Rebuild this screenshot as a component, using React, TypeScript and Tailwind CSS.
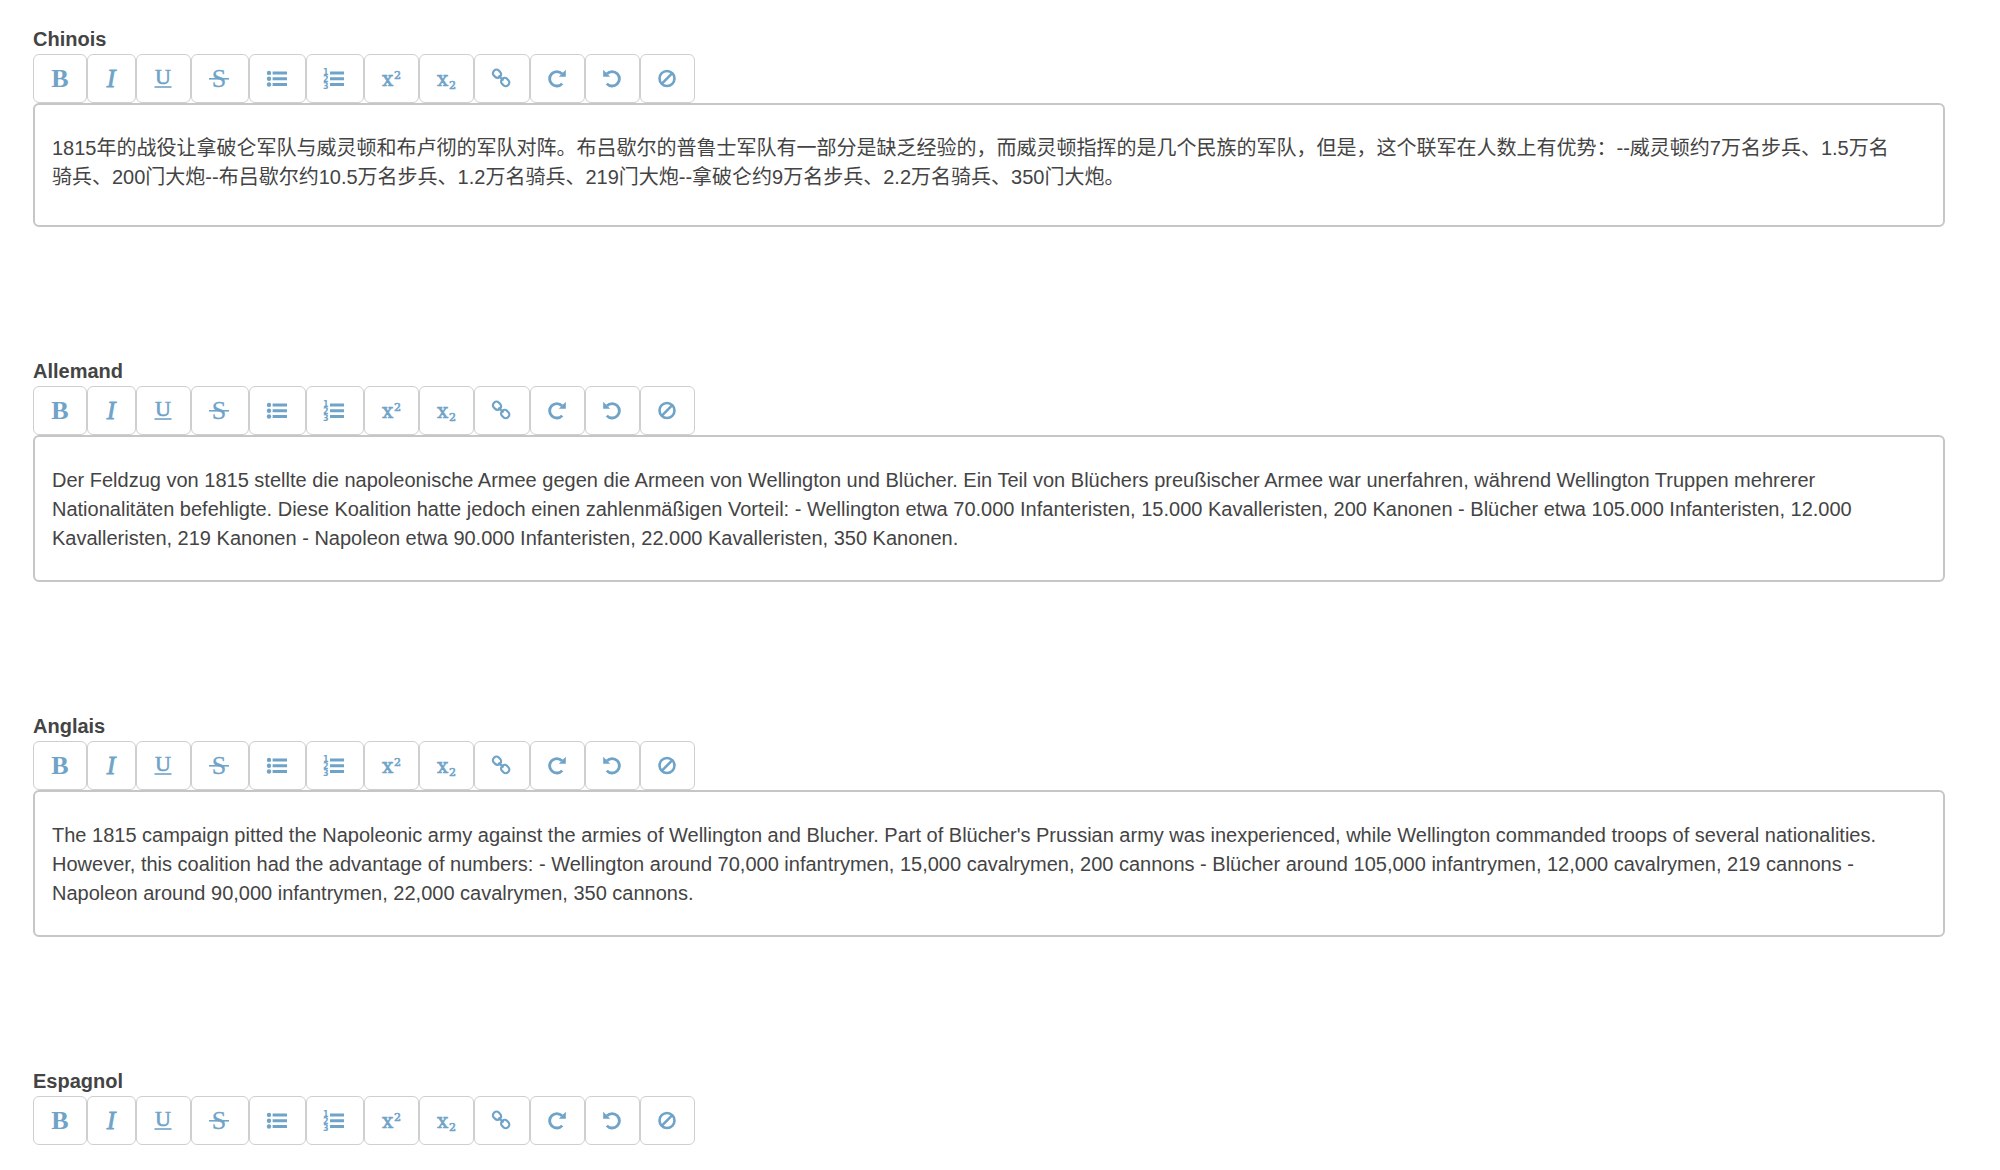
import React from 'react';

type Tool = {
  name: string;
  width: string;
  icon: React.ReactNode;
};

type Section = {
  id: string;
  label: string;
  text?: string;
};

const serif = "font-['Liberation_Serif',serif]";
const slab = "font-['DejaVu_Serif',serif]";

const tools: Tool[] = [
  {
    name: 'Gras',
    width: 'w-[54px]',
    icon: <text x="13" y="21" textAnchor="middle" className={`${serif} text-[26px] font-bold`}>B</text>,
  },
  {
    name: 'Italique',
    width: 'w-[49px]',
    icon: (
      <text x="12" y="21" textAnchor="middle" stroke="currentColor" strokeWidth="0.8" className={`${serif} text-[26px] italic`}>I</text>
    ),
  },
  {
    name: 'Souligné',
    width: 'w-[55px]',
    icon: (
      <>
        <text x="12" y="18" textAnchor="middle" stroke="currentColor" strokeWidth="0.6" className={`${serif} text-[22px]`}>U</text>
        <path d="M3.5 20.2h17v1.6h-17z" />
      </>
    ),
  },
  {
    name: 'Barré',
    width: 'w-[58px]',
    icon: (
      <>
        <text x="12" y="21" textAnchor="middle" stroke="currentColor" strokeWidth="0.3" className={`${serif} text-[26px]`}>S</text>
        <path d="M2 12h20v1.6h-20z" />
      </>
    ),
  },
  {
    name: 'Liste à puces',
    width: 'w-[57px]',
    icon: (
      <>
        <circle cx="4" cy="6.9" r="2.2" />
        <circle cx="4" cy="12.7" r="2.2" />
        <circle cx="4" cy="18.5" r="2.2" />
        <path d="M7.6 5.4h14.4v3h-14.4zM7.6 11.2h14.4v3h-14.4zM7.6 17h14.4v3h-14.4z" />
      </>
    ),
  },
  {
    name: 'Liste numérotée',
    width: 'w-[58px]',
    icon: (
      <>
        <g className="font-['DejaVu_Sans',sans-serif] text-[8px] font-bold">
          <text x="1" y="9">1</text>
          <text x="1" y="16">2</text>
          <text x="1" y="23">3</text>
        </g>
        <path d="M8 5.4h14v3h-14zM8 11.2h14v3h-14zM8 17h14v3h-14z" />
      </>
    ),
  },
  {
    name: 'Exposant',
    width: 'w-[55px]',
    icon: (
      <g className={slab} stroke="currentColor" strokeWidth="0.6">
        <text x="3" y="20" className="text-[20px]">x</text>
        <text x="15" y="13" className="text-[11px]">2</text>
      </g>
    ),
  },
  {
    name: 'Indice',
    width: 'w-[55px]',
    icon: (
      <g className={slab} stroke="currentColor" strokeWidth="0.6">
        <text x="3" y="20" className="text-[20px]">x</text>
        <text x="15" y="23" className="text-[11px]">2</text>
      </g>
    ),
  },
  {
    name: 'Lien',
    width: 'w-[56px]',
    icon: (
      <g fill="none" stroke="currentColor" strokeWidth="2.2">
        <rect x="3.8" y="4.2" width="8.4" height="7" rx="3.2" transform="rotate(45 8 7.7)" />
        <rect x="12" y="12.5" width="8.4" height="7" rx="3.2" transform="rotate(45 16.2 16)" />
        <path d="M9.5 9.5l5 5" />
      </g>
    ),
  },
  {
    name: 'Rétablir',
    width: 'w-[55px]',
    icon: (
      <>
        <path d="M17.2 17.6a7.2 7.2 0 1 1 -0.2 -9.8" fill="none" stroke="currentColor" strokeWidth="2.9" />
        <path d="M20.8 3.8v7h-7z" />
      </>
    ),
  },
  {
    name: 'Annuler',
    width: 'w-[55px]',
    icon: (
      <>
        <path d="M6.8 17.6a7.2 7.2 0 1 0 0.2 -9.8" fill="none" stroke="currentColor" strokeWidth="2.9" />
        <path d="M3.2 3.8v7h7z" />
      </>
    ),
  },
  {
    name: 'Effacer la mise en forme',
    width: 'w-[55px]',
    icon: (
      <g fill="none" stroke="currentColor" strokeWidth="2.6">
        <circle cx="12" cy="12.5" r="7.5" />
        <path d="M6.7 17.8l10.6-10.6" />
      </g>
    ),
  },
];

const sections: Section[] = [
  {
    id: 'zh',
    label: 'Chinois',
    text: '1815年的战役让拿破仑军队与威灵顿和布卢彻的军队对阵。布吕歇尔的普鲁士军队有一部分是缺乏经验的，而威灵顿指挥的是几个民族的军队，但是，这个联军在人数上有优势：--威灵顿约7万名步兵、1.5万名骑兵、200门大炮--布吕歇尔约10.5万名步兵、1.2万名骑兵、219门大炮--拿破仑约9万名步兵、2.2万名骑兵、350门大炮。',
  },
  {
    id: 'de',
    label: 'Allemand',
    text: 'Der Feldzug von 1815 stellte die napoleonische Armee gegen die Armeen von Wellington und Blücher. Ein Teil von Blüchers preußischer Armee war unerfahren, während Wellington Truppen mehrerer Nationalitäten befehligte. Diese Koalition hatte jedoch einen zahlenmäßigen Vorteil: - Wellington etwa 70.000 Infanteristen, 15.000 Kavalleristen, 200 Kanonen - Blücher etwa 105.000 Infanteristen, 12.000 Kavalleristen, 219 Kanonen - Napoleon etwa 90.000 Infanteristen, 22.000 Kavalleristen, 350 Kanonen.',
  },
  {
    id: 'en',
    label: 'Anglais',
    text: "The 1815 campaign pitted the Napoleonic army against the armies of Wellington and Blucher. Part of Blücher's Prussian army was inexperienced, while Wellington commanded troops of several nationalities. However, this coalition had the advantage of numbers: - Wellington around 70,000 infantrymen, 15,000 cavalrymen, 200 cannons - Blücher around 105,000 infantrymen, 12,000 cavalrymen, 219 cannons - Napoleon around 90,000 infantrymen, 22,000 cavalrymen, 350 cannons.",
  },
  { id: 'es', label: 'Espagnol' },
];

function Toolbar({ label }: { label: string }) {
  return (
    <div role="toolbar" aria-label={label} className="flex">
      {tools.map((tool) => (
        <button
          key={tool.name}
          type="button"
          title={tool.name}
          aria-label={tool.name}
          className={`${tool.width} h-[49px] flex items-center justify-center rounded-md border border-[#cfcfcf] bg-white pr-0.5 pb-0.5 text-[#6fa3c8] hover:bg-gray-50`}
        >
          <svg viewBox="0 0 24 24" className="h-6 w-6 shrink-0 overflow-visible" fill="currentColor" aria-hidden="true">
            {tool.icon}
          </svg>
        </button>
      ))}
    </div>
  );
}

function Editor({ id, label, text }: Section) {
  return (
    <section>
      {text ? (
        <label htmlFor={id} className="block h-7 text-xl leading-[27px] font-bold text-[#444]">
          {label}
        </label>
      ) : (
        <h2 className="h-7 text-xl leading-[27px] font-bold text-[#444]">{label}</h2>
      )}
      <Toolbar label={label} />
      {text && (
        <textarea
          id={id}
          defaultValue={text}
          spellCheck={false}
          className="block w-full min-h-[124px] resize-none field-sizing-content overflow-hidden rounded-md border-2 border-[#c6c6c6] pt-[29px] pr-[38px] pb-[27px] pl-[17px] text-xl leading-[29px] text-[#444]"
        />
      )}
    </section>
  );
}

export default function App() {
  return (
    <main className="flex min-h-screen flex-col gap-[131px] bg-white pt-[26px] pr-[55px] pb-6 pl-[33px] font-['Liberation_Sans','Noto_Sans_CJK_SC',sans-serif]">
      {sections.map((section) => (
        <Editor key={section.id} {...section} />
      ))}
    </main>
  );
}
